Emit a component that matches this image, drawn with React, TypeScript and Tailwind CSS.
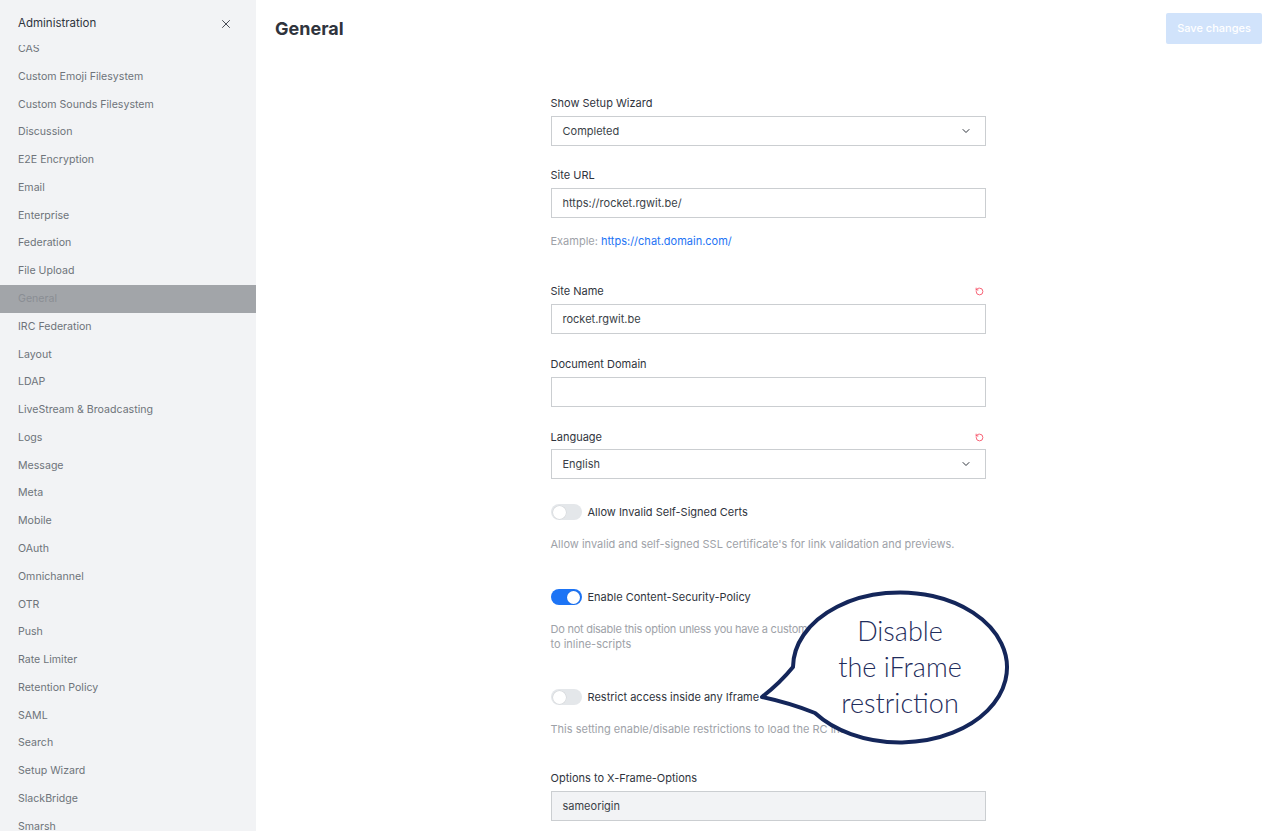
import { X, ChevronDown, RotateCcw } from 'lucide-react';

const sections = [
  'CAS',
  'Custom Emoji Filesystem',
  'Custom Sounds Filesystem',
  'Discussion',
  'E2E Encryption',
  'Email',
  'Enterprise',
  'Federation',
  'File Upload',
  'General',
  'IRC Federation',
  'Layout',
  'LDAP',
  'LiveStream & Broadcasting',
  'Logs',
  'Message',
  'Meta',
  'Mobile',
  'OAuth',
  'Omnichannel',
  'OTR',
  'Push',
  'Rate Limiter',
  'Retention Policy',
  'SAML',
  'Search',
  'Setup Wizard',
  'SlackBridge',
  'Smarsh',
  'SMS',
];

function Label({ text, reset }: { text: string; reset?: boolean }) {
  return (
    <div className="flex items-center justify-between h-[14px] text-[11px] leading-[14px] text-[#2f343d]">
      <span>{text}</span>
      {reset && <RotateCcw className="w-[9px] h-[9px] mr-[2px] text-[#f5455c]" strokeWidth={2.2} />}
    </div>
  );
}

function Input({ value, select, disabled }: { value: string; select?: boolean; disabled?: boolean }) {
  return (
    <div
      className={`h-[30px] border-[1.5px] border-[#cbced1] flex items-center justify-between px-[11px] text-[11px] text-[#3a3f47] ${
        disabled ? 'bg-[#f2f3f5]' : 'bg-white'
      }`}
    >
      <span>{value}</span>
      {select && <ChevronDown className="w-[12px] h-[12px] mr-[2px] text-[#2f343d]" strokeWidth={2} />}
    </div>
  );
}

function Toggle({ on, label }: { on?: boolean; label: string }) {
  return (
    <div className="flex items-center h-[16px] gap-[6px]">
      <div
        className={`w-[31px] h-[16px] rounded-full flex items-center px-[2px] ${
          on ? 'bg-[#1d74f5] justify-end' : 'bg-[#e4e7ea] justify-start'
        }`}
      >
        <div className="w-[13px] h-[13px] rounded-full bg-white shadow-[0_0_0_0.5px_rgba(0,0,0,0.08)]" />
      </div>
      <span className="text-[11px] text-[#2f343d]">{label}</span>
    </div>
  );
}

function Hint({ children }: { children: React.ReactNode }) {
  return <p className="text-[11px] leading-[15px] text-[#9ea2a8]">{children}</p>;
}

export default function App() {
  return (
    <div className="flex w-[1280px] h-[831px] overflow-hidden bg-white font-['Inter',sans-serif]">
      {/* Sidebar */}
      <aside className="w-[256px] shrink-0 bg-[#f2f3f5] flex flex-col">
        <div className="h-[45px] shrink-0 flex items-center justify-between pl-[18px] pr-[23px] pt-[2px] relative z-10 bg-[#f2f3f5]">
          <span className="text-[11.5px] text-[#2f343d]">Administration</span>
          <X className="w-[14px] h-[14px] text-[#2f343d]" strokeWidth={1.5} />
        </div>
        <div className="flex-1 overflow-hidden">
          <ul className="-mt-[10px]">
            {sections.map((s) => (
              <li
                key={s}
                className={`h-[27.79px] flex items-center pl-[18px] text-[10.6px] ${
                  s === 'General' ? 'bg-[#a2a5a9] text-[#8a8e94]' : 'text-[#6e737a]'
                }`}
              >
                {s}
              </li>
            ))}
          </ul>
        </div>
      </aside>

      {/* Main */}
      <main className="flex-1 relative">
        <div className="h-[56px] flex items-center justify-between pl-[19px] pr-[18px]">
          <h1 className="text-[18px] font-bold text-[#2f343d]">General</h1>
          <button className="h-[31px] w-[96px] rounded-[2px] bg-[#d1e3fb] text-white text-[11px] font-medium">
            Save changes
          </button>
        </div>

        <div className="w-[435px] mx-auto">
          <div className="mt-[40px]">
            <Label text="Show Setup Wizard" />
            <div className="mt-[6px]">
              <Input value="Completed" select />
            </div>
          </div>

          <div className="mt-[22px]">
            <Label text="Site URL" />
            <div className="mt-[6px]">
              <Input value="https://rocket.rgwit.be/" />
            </div>
            <div className="mt-[16px]">
              <Hint>
                Example: <span className="text-[#1d74f5]">https://chat.domain.com/</span>
              </Hint>
            </div>
          </div>

          <div className="mt-[35px]">
            <Label text="Site Name" reset />
            <div className="mt-[6px]">
              <Input value="rocket.rgwit.be" />
            </div>
          </div>

          <div className="mt-[23px]">
            <Label text="Document Domain" />
            <div className="mt-[6px]">
              <Input value="" />
            </div>
          </div>

          <div className="mt-[23px]">
            <Label text="Language" reset />
            <div className="mt-[5px]">
              <Input value="English" select />
            </div>
          </div>

          <div className="mt-[25px]">
            <Toggle label="Allow Invalid Self-Signed Certs" />
            <div className="mt-[17px]">
              <Hint>Allow invalid and self-signed SSL certificate's for link validation and previews.</Hint>
            </div>
          </div>

          <div className="mt-[37px]">
            <Toggle on label="Enable Content-Security-Policy" />
            <div className="mt-[17px]">
              <Hint>
                <span className="whitespace-nowrap tracking-[-0.25px]">
                  Do not disable this option unless you have a custom build and are having problems due
                </span>
                <br />
                to inline-scripts
              </Hint>
            </div>
          </div>

          <div className="mt-[37px]">
            <Toggle label="Restrict access inside any Iframe" />
            <div className="mt-[17px]">
              <Hint>This setting enable/disable restrictions to load the RC inside any iframe</Hint>
            </div>
          </div>

          <div className="mt-[34px]">
            <Label text="Options to X-Frame-Options" />
            <div className="mt-[6px]">
              <Input value="sameorigin" disabled />
            </div>
          </div>
        </div>

        {/* Speech bubble callout */}
        <div className="absolute left-[494px] top-[585px] w-[265px] h-[165px]">
          <svg width="265" height="165" viewBox="0 0 265 165" className="absolute inset-0">
            <path
              d="M 43 82 A 107 75 0 1 1 65 128 Q 40 118 12 112 Q 30 98 43 82 Z"
              fill="white"
              stroke="#14265a"
              strokeWidth="4"
              strokeLinejoin="round"
            />
          </svg>
          <div className="absolute left-[43px] top-[28px] w-[214px] flex flex-col items-center text-[27px] leading-[36px] font-light text-[#1f2d5c] font-['Lato',sans-serif]">
            <span>Disable</span>
            <span>the iFrame</span>
            <span>restriction</span>
          </div>
        </div>
      </main>
    </div>
  );
}
